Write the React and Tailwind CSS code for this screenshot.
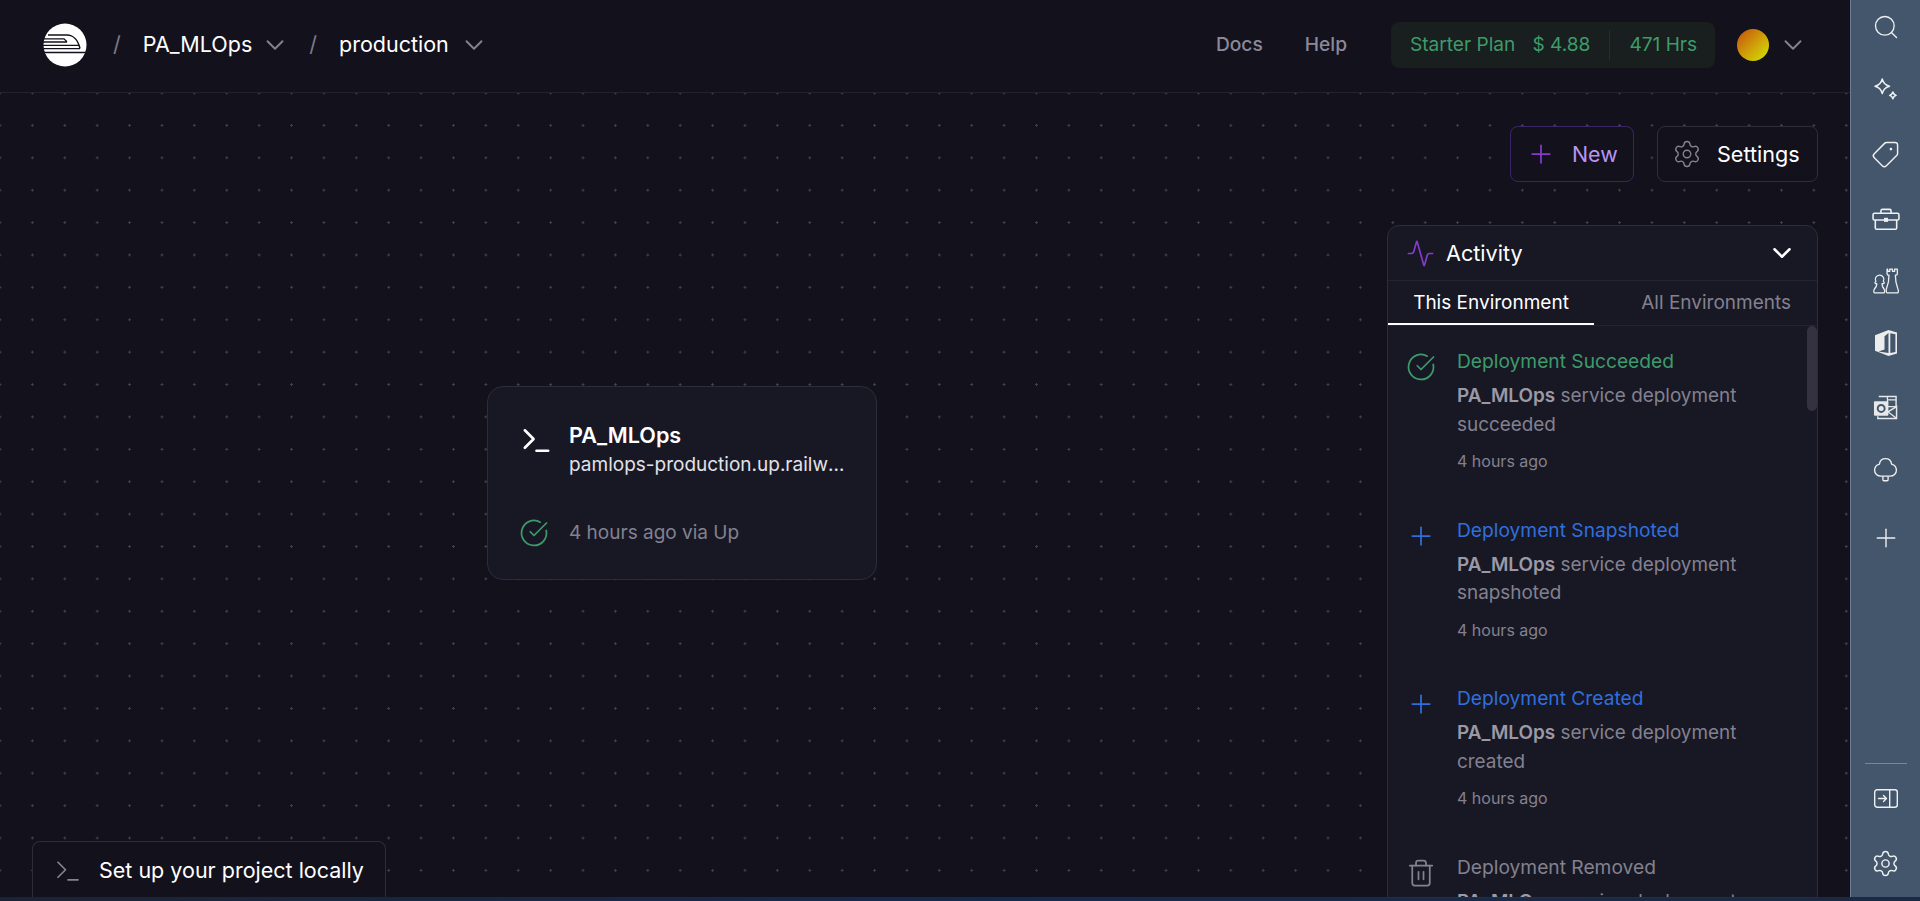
import React from 'react';
import { Search, Tag, Plus, Settings, Trash2, ChevronDown, Activity, CircleCheckBig, Terminal } from 'lucide-react';

const Logo = () => (
  <svg width="44" height="44" viewBox="0 0 44 44" className="shrink-0">
    <circle cx="22" cy="22" r="21.500" fill="#fff" />
    <path d="M5 12H24c6 0 11 5 13 13.500" stroke="#13111c" strokeWidth="1.500" fill="none" />
    <path d="M0 15.800H21l3 3M0 19H24M0 22.300H36M0 25.600H37M1 29.500H43" stroke="#13111c" strokeWidth="1.300" fill="none" />
  </svg>
);

const Sparkle = () => (
  <svg width="30" height="30" viewBox="0 0 24 24" fill="none" stroke="currentColor" strokeWidth="1.200" strokeLinejoin="round">
    <path d="M9 3.200c.8 3.200 2.400 5 5.800 5.800-3.400.8-5 2.600-5.800 5.800C8.200 11.600 6.600 9.800 3.200 9 6.600 8.200 8.200 6.400 9 3.200z" />
    <path d="M17.500 13.600c.4 1.500 1.100 2.300 2.600 2.700-1.500.4-2.200 1.200-2.600 2.700-.4-1.500-1.100-2.300-2.600-2.700 1.500-.4 2.200-1.200 2.600-2.700z" />
  </svg>
);

const Toolbox = () => (
  <svg width="32" height="27" viewBox="0 0 28 24" fill="none" stroke="currentColor" strokeWidth="1.400" strokeLinejoin="round">
    <path d="M9.500 6.500V4.200c0-.7.500-1.200 1.200-1.200h6.600c.7 0 1.200.5 1.200 1.200v2.300" />
    <rect x="2.500" y="6.500" width="23" height="6" rx="1.200" />
    <path d="M4.500 12.500v7c0 .7.500 1.200 1.200 1.200h16.600c.7 0 1.200-.5 1.200-1.200v-7" />
    <rect x="12.200" y="10.500" width="3.600" height="3.600" fill="currentColor" stroke="none" />
  </svg>
);

const Chess = () => (
  <svg width="28" height="28" viewBox="0 0 26 26" fill="none" stroke="currentColor" strokeWidth="1.200" strokeLinejoin="round">
    <path d="M14 2v4.500c0 .6.500 1 1 1h.8c0 5-.8 9-2.300 12.500-.5 1.200-.4 3.500.5 4h10c.7-.8.7-3-.1-4-1.400-3.500-2.200-7.500-2.200-12.500h.8c.6 0 1-.4 1-1V2h-2.500v2h-2V2h-2.500v2h-2V2z" />
    <path d="M7 7.500a4 4 0 0 1 3.500 6c1 .5 1 1.500.3 2H9.300c0 2 .8 3.800 2 5.200.6.8.6 2.800 0 3.300H2.200c-.7-.6-.7-2.400-.1-3.300 1.300-1.500 2.400-3.200 2.400-5.200H3.300c-.7-.5-.7-1.500.3-2A4 4 0 0 1 7 7.500z" />
  </svg>
);

const Office = () => (
  <svg width="24" height="28" viewBox="0 0 24 28">
    <path d="M14.500 1 1 6.200v15.600L14.500 27l8.500-2.500V3.500z" fill="#ececec" />
    <path d="M14.500 4v20L4.500 22.400l6-1.900V7.200z" fill="#44566c" />
    <path d="M16.300 4.200 21.400 5.200v17.700l-5.100 1.200z" fill="#44566c" />
  </svg>
);

const Outlook = () => (
  <svg width="25" height="25" viewBox="0 0 26 26" fill="none">
    <path d="M6 1.500H24v10" stroke="#e6e8ea" strokeWidth="1.500" />
    <path d="M15 1.500v6.500M15 5h9M24 12h-9" stroke="#e6e8ea" strokeWidth="1.300" />
    <rect x="1" y="6.500" width="15" height="15" rx="1" fill="#e6e8ea" />
    <circle cx="8.500" cy="14" r="3.600" stroke="#44566c" strokeWidth="2" />
    <path d="M5 22v2.500h19.500V12L15.500 17.500" stroke="#e6e8ea" strokeWidth="1.500" />
    <path d="M15.500 17.500 24 24" stroke="#e6e8ea" strokeWidth="1.300" />
  </svg>
);

const TreeCloud = () => (
  <svg width="27" height="27" viewBox="0 0 24 24" fill="none" stroke="currentColor" strokeWidth="1.200" strokeLinejoin="round">
    <path d="M12 1.500c3 0 5 2 5.400 4.800 2.500.8 4.300 3 4.300 5.500 0 3-2.500 5.200-5.500 5.200H7.800c-3 0-5.500-2.200-5.500-5.200 0-2.500 1.800-4.700 4.300-5.500C7 3.500 9 1.500 12 1.500z" />
    <path d="M9.700 17v3.300c0 .5.300.8.800.8h3c.5 0 .8-.3.800-.8V17" />
  </svg>
);

const PanelIn = () => (
  <svg width="24" height="19" viewBox="0 0 24 19" fill="none" stroke="currentColor" strokeWidth="1.400" strokeLinecap="round" strokeLinejoin="round">
    <rect x="0.700" y="0.700" width="22.600" height="17.600" rx="2.500" />
    <path d="M15.700 1v17M4.500 9.500h8M9.500 6.500l3 3-3 3" />
  </svg>
);

// sidebar icons are placed by fixed row heights
const SideIcon = ({ className, children }) => (
  <div className={`flex items-center justify-center text-[#eef0f2] ${className}`}>{children}</div>
);

const Sidebar = () => (
  <aside className="w-[70px] shrink-0 flex flex-col items-center bg-[#44566c] border-l border-[#6d7d90] pt-[2px]">
    <SideIcon className="h-[50px]"><Search size={28} strokeWidth={1.150} /></SideIcon>
    <SideIcon className="h-[64px] mt-[6px]"><Sparkle /></SideIcon>
    <SideIcon className="h-[64px]"><Tag size={29} strokeWidth={1.200} className="rotate-90" /></SideIcon>
    <SideIcon className="h-[66px]"><Toolbox /></SideIcon>
    <SideIcon className="h-[58px]"><Chess /></SideIcon>
    <SideIcon className="h-[66px]"><Office /></SideIcon>
    <SideIcon className="h-[62px]"><Outlook /></SideIcon>
    <SideIcon className="h-[64px]"><TreeCloud /></SideIcon>
    <SideIcon className="h-[72px]"><Plus size={30} strokeWidth={1.100} /></SideIcon>
    <div className="flex-1" />
    <div className="w-[42px] h-px bg-[#7a8797]" />
    <SideIcon className="h-[69px]"><PanelIn /></SideIcon>
    <SideIcon className="h-[60px]"><Settings size={29} strokeWidth={1.200} /></SideIcon>
    <div className="h-[4px]" />
  </aside>
);

const Header = () => (
  <header className="h-[93px] shrink-0 flex items-center border-b border-[#24222f] pl-[43px] pr-[42px] pb-[3px]">
    <Logo />
    <span className="ml-[26px] text-[21.600px] text-[#7c7a88]">/</span>
    <span className="ml-[22px] text-[21.500px] text-white">PA_MLOps</span>
    <ChevronDown size={30} strokeWidth={1.500} className="ml-[8px] text-[#85838f]" />
    <span className="ml-[19px] text-[21.600px] text-[#7c7a88]">/</span>
    <span className="ml-[22px] text-[21.500px] text-white">production</span>
    <ChevronDown size={30} strokeWidth={1.500} className="ml-[10px] text-[#85838f]" />
    <div className="flex-1" />
    <span className="text-[19.200px] font-medium text-[#8b8997]">Docs</span>
    <span className="ml-[42px] text-[19.200px] font-medium text-[#8b8997]">Help</span>
    <div className="ml-[44px] w-[324px] h-[46px] rounded-lg bg-[#191e1e] flex items-center pl-[19px] text-[19.100px] text-[#3d9b6b]">
      <span>Starter Plan</span>
      <span className="ml-[17px]">$ 4.88</span>
      <div className="ml-[19px] w-px h-[30px] bg-[#22302a]" />
      <span className="ml-[19px]">471 Hrs</span>
    </div>
    <div className="ml-[22px] w-[32px] h-[32px] rounded-full bg-gradient-to-br from-[#bf4a0a] to-[#cfe800]" />
    <ChevronDown size={30} strokeWidth={1.500} className="ml-[9px] text-[#85838f]" />
  </header>
);

const events = [
  { title: 'Deployment Succeeded', word: 'succeeded', color: 'text-[#3d9b6b]', icon: <CircleCheckBig size={30} strokeWidth={1.400} className="text-[#3d9b6b]" /> },
  { title: 'Deployment Snapshoted', word: 'snapshoted', color: 'text-[#2f6fde]', icon: <Plus size={30} strokeWidth={1.400} className="text-[#2f6fde]" /> },
  { title: 'Deployment Created', word: 'created', color: 'text-[#2f6fde]', icon: <Plus size={30} strokeWidth={1.400} className="text-[#2f6fde]" /> },
  { title: 'Deployment Removed', word: 'removed', color: 'text-[#83818f]', icon: <Trash2 size={30} strokeWidth={1.400} className="text-[#83818f]" /> },
];

const ActivityPanel = () => (
  <div className="absolute right-[32px] top-[132px] bottom-[-1px] w-[431px] rounded-t-xl border border-[#2e2c3b] bg-[#181825] flex flex-col overflow-hidden">
    <div className="h-[55px] shrink-0 flex items-center border-b border-[#242331] pl-[18px] pr-[20px]">
      <Activity size={29} strokeWidth={1.400} className="text-[#853bce]" />
      <span className="ml-[11px] text-[21.600px] text-white">Activity</span>
      <div className="flex-1" />
      <ChevronDown size={30} strokeWidth={2} className="text-white" />
    </div>
    <div className="h-[45px] shrink-0 flex items-center border-b border-[#242331] text-[19px]">
      <div className="w-[206px] h-full flex items-center justify-center pt-[2px] text-white border-b-2 border-white">This Environment</div>
      <div className="flex-1 text-right pr-[26px] pt-[1px] text-[#83818f]">All Environments</div>
    </div>
    <div className="relative flex-1 overflow-hidden pt-[21px]">
      <div className="absolute right-0 top-0 w-[10px] h-[85px] rounded-full bg-[#33323e]" />
      {events.map((ev) => (
        <div key={ev.title} className="flex h-[168.700px] pl-[18px]">
          <div className="w-[30px] h-[30px] mt-[5px] shrink-0">{ev.icon}</div>
          <div className="ml-[21px]">
            <div className={`text-[19.200px] leading-[28px] ${ev.color}`}>{ev.title}</div>
            <div className="mt-[7px] w-[310px] text-[18.900px] leading-[28.500px] text-[#83818f]">
              <strong className="font-semibold text-[#9b99a6]">PA_MLOps</strong> service deployment {ev.word}
            </div>
            <div className="mt-[10px] text-[16px] leading-[24px] text-[#83818f]">4 hours ago</div>
          </div>
        </div>
      ))}
    </div>
  </div>
);

export default function App() {
  return (
    <div className="h-screen w-full overflow-hidden flex flex-col bg-[#13111c] font-['Inter',sans-serif]">
      <div className="flex-1 min-h-0 flex">
        <main className="flex-1 min-w-0 flex flex-col">
          <Header />
          <div className="relative flex-1 bg-[radial-gradient(circle,#42414e_1px,transparent_1px)] bg-[size:32.400px_32.400px] bg-[position:16.200px_-16.200px]">
            {/* buttons top right */}
            <div className="absolute right-[32px] top-[33px] flex gap-[23px]">
              <button className="w-[124px] h-[56px] rounded-lg border border-[#3c2566] bg-[#13111c] flex items-center pl-[15px] text-[21.400px] text-[#b794f4]">
                <Plus size={30} strokeWidth={1.400} className="text-[#853bce]" />
                <span className="ml-[16px]">New</span>
              </button>
              <button className="w-[161px] h-[56px] rounded-lg border border-[#302e3b] bg-[#13111c] flex items-center pl-[14px] text-[21.600px] text-white">
                <Settings size={30} strokeWidth={1.100} className="text-[#85838f]" />
                <span className="ml-[15px]">Settings</span>
              </button>
            </div>

            <ActivityPanel />

            {/* service node */}
            <div className="absolute left-[487px] top-[293px] w-[390px] h-[194px] rounded-2xl border border-[#2e2c3b] bg-[#181825]">
              <div className="flex pl-[31px] pt-[33px]">
                <Terminal size={35} strokeWidth={1.800} className="text-white mt-[3px] shrink-0" />
                <div className="ml-[15px]">
                  <div className="text-[21.600px] leading-[30px] font-semibold text-white">PA_MLOps</div>
                  <div className="text-[19px] leading-[30px] text-[#e3e2e8] w-[280px] truncate">pamlops-production.up.railway.app</div>
                </div>
              </div>
              <div className="flex items-center pl-[31px] mt-[38px]">
                <CircleCheckBig size={30} strokeWidth={1.400} className="text-[#3d9b6b]" />
                <span className="ml-[20px] text-[19px] text-[#83818f]">4 hours ago via Up</span>
              </div>
            </div>

            {/* local setup bar */}
            <div className="absolute left-[32px] bottom-0 w-[354px] h-[56px] rounded-t-lg border border-b-0 border-[#2e2c3b] bg-[#13111c] flex items-center pl-[20px] pt-[2px]">
              <Terminal size={30} strokeWidth={1.400} className="text-[#85838f]" />
              <span className="ml-[16px] text-[21.500px] text-white">Set up your project locally</span>
            </div>
          </div>
        </main>
        <Sidebar />
      </div>
      <div className="h-[4px] shrink-0 bg-gradient-to-r from-[#1a2436] via-[#12294f] to-[#1a2a44]" />
    </div>
  );
}
